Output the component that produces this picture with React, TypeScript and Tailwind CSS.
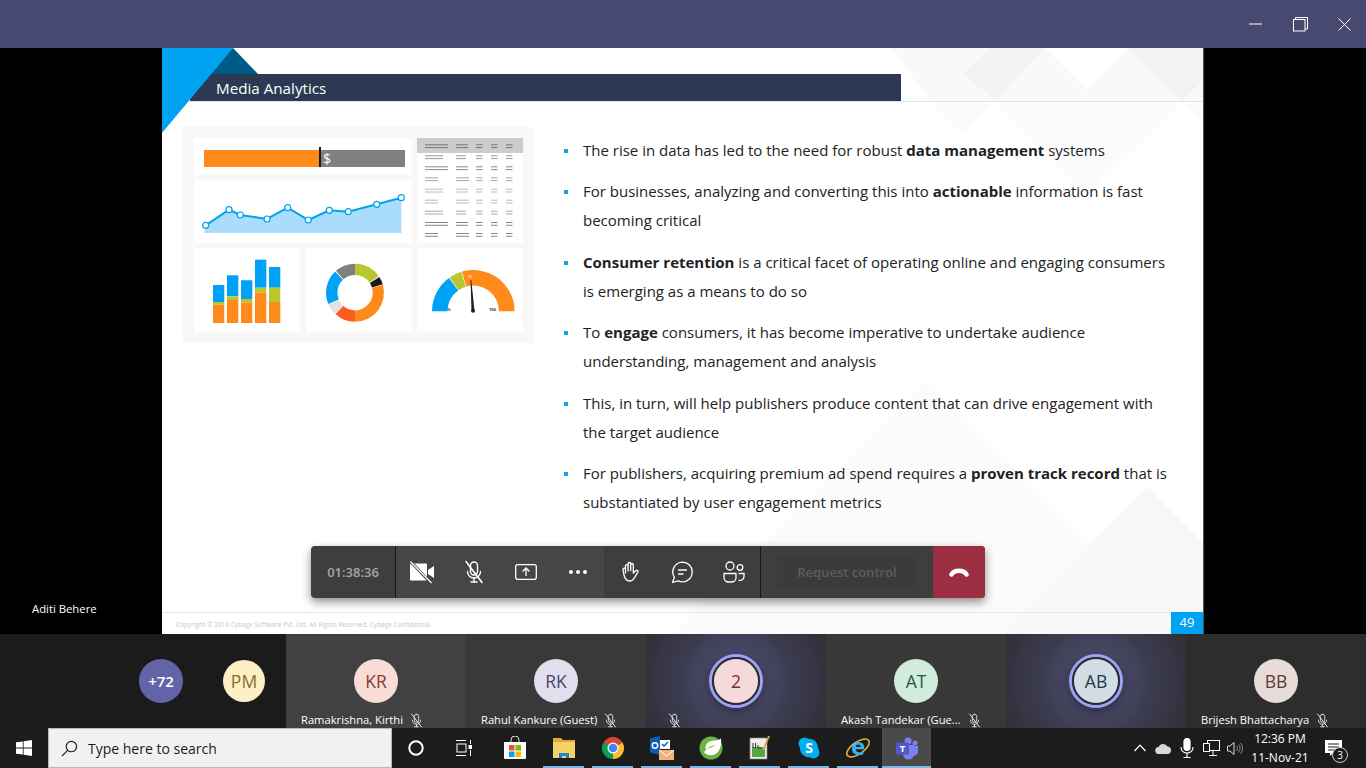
import React from "react";

const sans = "font-['Open_Sans','Noto_Sans',sans-serif]";

function polar(cx: number, cy: number, r: number, deg: number) {
  const a = ((deg - 90) * Math.PI) / 180;
  return [cx + r * Math.cos(a), cy + r * Math.sin(a)];
}
function arc(cx: number, cy: number, ro: number, ri: number, a: number, b: number) {
  const [x1, y1] = polar(cx, cy, ro, a);
  const [x2, y2] = polar(cx, cy, ro, b);
  const [x3, y3] = polar(cx, cy, ri, b);
  const [x4, y4] = polar(cx, cy, ri, a);
  const large = b - a > 180 ? 1 : 0;
  return `M${x1} ${y1}A${ro} ${ro} 0 ${large} 1 ${x2} ${y2}L${x3} ${y3}A${ri} ${ri} 0 ${large} 0 ${x4} ${y4}Z`;
}

function MoneyBar() {
  return (
    <svg width="218" height="37" viewBox="0 0 218 37">
      <rect x="10" y="12" width="201" height="17" fill="#808080" />
      <rect x="10" y="12" width="115" height="17" fill="#ff8a1c" />
      <rect x="125" y="9" width="2" height="20" fill="#1a1a1a" />
      <text x="129" y="26" fill="#fff" fontSize="14" fontWeight="500" fontFamily="Open Sans">$</text>
    </svg>
  );
}

function LineChart() {
  const p: [number, number][] = [[11.7, 45.3], [35, 29.7], [46.3, 35], [73, 39], [93.7, 27.7], [114.3, 40], [135.3, 30.3], [154.3, 31.7], [182.7, 24.3], [207.3, 17.7]];
  const line = p.map((q) => q.join(",")).join(" ");
  return (
    <svg width="218" height="63" viewBox="0 0 218 63">
      <polygon points={`10.3,53 ${line} 207.3,53`} fill="#aaddfc" />
      <polyline points={line} fill="none" stroke="#00a2ef" strokeWidth="2" />
      {p.map((q, i) => (
        <circle key={i} cx={q[0]} cy={q[1]} r="3" fill="#fff" stroke="#00a2ef" strokeWidth="1.2" />
      ))}
    </svg>
  );
}

function TableChart() {
  const widths = [23, 18, 23, 13, 18, 13, 18, 23, 13];
  const ys = [8.3, 19.3, 30.3, 41.3, 52.7, 63.7, 74.7, 86, 97];
  const shade = ["#777", "#999", "#8a8a8a", "#aaa", "#bbb", "#bbb", "#aaa", "#888", "#888"];
  const second = [12, 10, 12, 13, 12, 13, 10, 12, 13];
  return (
    <svg width="106" height="105" viewBox="0 0 106 105">
      <rect x="0" y="0" width="106" height="15" fill="#cccccc" />
      {ys.map((y, i) => (
        <g key={i} fill={shade[i]}>
          {[
            [8, widths[i]],
            [39, second[i]],
            [59, 6.5],
            [74, 6.5],
            [89, 6.5],
          ].map(([x, w], j) => (
            <g key={j}>
              <rect x={x} y={y - 2} width={w} height="1" />
              <rect x={x} y={y + 0.8} width={w} height="1" />
            </g>
          ))}
        </g>
      ))}
    </svg>
  );
}

function StackBars() {
  const bars = [
    [19, 37, 54, 56.7],
    [33, 27.3, 48.3, 52],
    [47, 32.3, 51, 54.7],
    [61, 11.7, 39.7, 44.7],
    [75, 19, 39.7, 54],
  ];
  return (
    <svg width="106" height="84" viewBox="0 0 106 84">
      {bars.map(([x, a, b, c]) => (
        <g key={x}>
          <rect x={x} y={a} width="11.3" height={b - a} fill="#00a2f7" />
          <rect x={x} y={b} width="11.3" height={c - b} fill="#b9c72f" />
          <rect x={x} y={c} width="11.3" height={75 - c} fill="#ff8a1c" />
        </g>
      ))}
    </svg>
  );
}

function Donut() {
  const seg: [number, number, string][] = [
    [0, 55, "#b9c72f"],
    [57, 73, "#1a1a1a"],
    [74, 180, "#ff8a1c"],
    [180, 222, "#ff5a1f"],
    [223, 246, "#e2e2e2"],
    [247, 317, "#00a2f7"],
    [319, 360, "#808080"],
  ];
  return (
    <svg width="106" height="84" viewBox="0 0 106 84">
      {seg.map(([a, b, c]) => (
        <path key={a} d={arc(49, 44.7, 29, 17.7, a, b)} fill={c} />
      ))}
    </svg>
  );
}

function Gauge() {
  const cx = 56.3;
  const cy = 63.3;
  return (
    <svg width="106" height="84" viewBox="0 0 106 84">
      <path d={arc(cx, cy, 41.3, 25.7, -90, -36)} fill="#00a2f7" />
      <path d={arc(cx, cy, 41.3, 25.7, -35, -17)} fill="#b9c72f" />
      <path d={arc(cx, cy, 41.3, 25.7, -16, 90)} fill="#ff8a1c" />
      <polygon points="53.5,32 54.3,32 57.5,63 54.5,63" fill="#222" />
      <circle cx="56" cy="62.7" r="2" fill="#222" />
      <text x="51" y="30" fontSize="4" fill="#fff" fontFamily="Open Sans">45</text>
      <text x="31" y="63" fontSize="4" fontWeight="700" fill="#333" fontFamily="Open Sans">0</text>
      <text x="72" y="63" fontSize="4" fontWeight="700" fill="#333" fontFamily="Open Sans">100</text>
    </svg>
  );
}

function CamOff() {
  return (
    <svg width="26" height="24" viewBox="0 0 26 24" fill="none">
      <path d="M1 4.500a1 1 0 0 1 1-1h15a1 1 0 0 1 1 1v15a1 1 0 0 1-1 1H2a1 1 0 0 1-1-1z" fill="#fff" />
      <path d="M19 10l6-4v12l-6-4z" fill="#fff" />
      <path d="M1 1l21 22" stroke="#464646" strokeWidth="3" />
      <path d="M1.500 1.500l21 21.500" stroke="#fff" strokeWidth="1.2" />
    </svg>
  );
}

function MicOff({ size = 24, stroke = "#fff" }: { size?: number; stroke?: string }) {
  return (
    <svg width={size} height={size} viewBox="0 0 24 24" fill="none" stroke={stroke} strokeWidth="1.4" strokeLinecap="round">
      <rect x="8.500" y="2" width="7" height="13" rx="3.500" />
      <path d="M5.500 11.500c0 4 3 6.500 6.500 6.500s6.500-2.500 6.500-6.500" />
      <path d="M12 18v4M9 22h6" />
      <path d="M4 1.500l16 21" strokeWidth="1.6" />
    </svg>
  );
}

function ShareIcon() {
  return (
    <svg width="24" height="24" viewBox="0 0 24 24" fill="none" stroke="#fff" strokeWidth="1.3">
      <rect x="1.700" y="4.700" width="20.600" height="14.600" rx="2" />
      <path d="M12 16V8.500M8.600 11.500L12 8l3.400 3.500" />
    </svg>
  );
}

function HandIcon() {
  return (
    <svg width="24" height="24" viewBox="0 0 24 24" fill="none" stroke="#fff" strokeWidth="1.3" strokeLinejoin="round" strokeLinecap="round">
      <path d="M7.500 13V6a1.300 1.300 0 0 1 2.600 0v5M10.100 10.500V3.800a1.300 1.300 0 0 1 2.600 0v6.700M12.700 10.500V4.800a1.300 1.300 0 0 1 2.600 0v8.200l2.600-2.500c1.300-1 2.800.4 1.900 1.600l-3.300 5.600c-1.100 2-2.500 3.300-4.800 3.300-3.200 0-4.800-2.300-5.600-5.500L5 9.500c-.2-1.600 2-1.900 2.500-.4" />
    </svg>
  );
}

function ChatIcon() {
  return (
    <svg width="24" height="24" viewBox="0 0 24 24" fill="none" stroke="#fff" strokeWidth="1.3" strokeLinecap="round">
      <path d="M12.500 2.200a9.800 9.800 0 0 1 0 19.600c-1.600 0-3-.4-4.300-1L2.500 22.500l1.900-5.200a9.800 9.800 0 0 1 8.100-15.100z" strokeLinejoin="round" />
      <path d="M8.500 10h8M8.500 14h4.500" />
    </svg>
  );
}

function PeopleIcon() {
  return (
    <svg width="24" height="24" viewBox="0 0 24 24" fill="none" stroke="#fff" strokeWidth="1.3">
      <circle cx="8" cy="6" r="4" />
      <circle cx="18" cy="7.500" r="2.800" />
      <path d="M2 13.500h12v4a4.500 4.500 0 0 1-4.500 4.500h-3A4.500 4.500 0 0 1 2 17.500z" strokeLinejoin="round" />
      <path d="M16.500 13.500H22v3a4 4 0 0 1-5.500 3.700" />
    </svg>
  );
}

function HangUp() {
  return (
    <svg width="22" height="10" viewBox="0 0 22 10" fill="none" stroke="#fff" strokeLinecap="round">
      <path d="M3.500 7.500C6 2.500 16 2.500 18.500 7.500" strokeWidth="4.500" />
    </svg>
  );
}

function ToolBtn({ children }: { children: React.ReactNode }) {
  return <div className="w-[52px] h-full flex items-center justify-center">{children}</div>;
}

function Toolbar() {
  return (
    <div className={`absolute left-[149px] top-[498px] w-[674px] h-[52px] flex rounded-[4px] overflow-hidden bg-[#3e3e3e] shadow-[0_4px_10px_rgba(0,0,0,0.45)] ${sans}`}>
      <div className="w-[85px] pt-[1px] flex items-center justify-center border-r border-[#1a1a1a] text-[13px] font-semibold text-[#a5a5a5]">01:38:36</div>
      <div className="w-[208px] flex bg-[#464646]">
        <ToolBtn><CamOff /></ToolBtn>
        <ToolBtn><MicOff /></ToolBtn>
        <ToolBtn><ShareIcon /></ToolBtn>
        <ToolBtn>
          <div className="flex gap-[3px]">
            <span className="w-[4px] h-[4px] rounded-full bg-white" />
            <span className="w-[4px] h-[4px] rounded-full bg-white" />
            <span className="w-[4px] h-[4px] rounded-full bg-white" />
          </div>
        </ToolBtn>
      </div>
      <div className="w-[157px] flex border-r border-[#1a1a1a]">
        <ToolBtn><HandIcon /></ToolBtn>
        <ToolBtn><ChatIcon /></ToolBtn>
        <ToolBtn><PeopleIcon /></ToolBtn>
      </div>
      <div className="flex-1 flex items-center justify-center">
        <div className="w-[140px] h-[32px] pt-[1px] rounded-[2px] flex items-center justify-center bg-[#3b3b3b] text-[13px] font-semibold text-[#5d5d5d]">Request control</div>
      </div>
      <div className="w-[52px] bg-[#9b2f41] flex items-center justify-center"><HangUp /></div>
    </div>
  );
}

function Tile({ name, initials, bg, fg, tile, speaking, mic = true }: { name?: string; initials: string; bg: string; fg: string; tile: string; speaking?: boolean; mic?: boolean }) {
  return (
    <div className={`w-[180px] h-[94px] flex flex-col ${tile}`}>
      <div className="h-[78px] pt-[25px] flex justify-center">
        <div className="relative w-[44px] h-[44px]">
          {speaking && <div className="absolute -inset-[5px] rounded-full border-[3px] border-[#9ea2f5] shadow-[0_4px_12px_rgba(20,20,40,0.5)]" />}
          {speaking && <div className="absolute -inset-[2px] rounded-full border-[2px] border-[#2a2a32]" />}
          <div className={`relative w-[44px] h-[44px] rounded-full flex items-center justify-center text-[17.500px] font-medium ${bg} ${fg}`}>{initials}</div>
        </div>
      </div>
      {mic && (
        <div className={`h-[16px] flex items-center gap-[6px] text-[11.200px] leading-[16px] text-white whitespace-nowrap ${name ? "pl-[15px]" : "pl-[21px]"}`}>
          {name && <span>{name}</span>}
          <MicOff size={15} stroke="#e8e8e8" />
        </div>
      )}
    </div>
  );
}

function WinLogo() {
  return (
    <svg width="16" height="16" viewBox="0 0 16 16" fill="#fff">
      <path d="M0 2.300l6.800-.9v6.200H0zM7.600 1.300L16 0v7.600H7.600zM0 8.400h6.800v6.200L0 13.700zM7.600 8.400H16V16l-8.400-1.200z" />
    </svg>
  );
}

function TaskIcon({ children, active, run }: { children: React.ReactNode; active?: boolean; run?: boolean }) {
  return (
    <div className={`relative h-[40px] flex items-center justify-center w-[49px] ${active ? "bg-[#4a4a4a]" : ""}`}>
      {children}
      {run && <span className={`absolute bottom-0 h-[2px] bg-[#76b9ed] ${active ? "left-0 right-0" : "left-[4px] right-[4px]"}`} />}
    </div>
  );
}

function Taskbar() {
  return (
    <div className={`h-[40px] bg-[#1c1c1c] flex items-center ${sans}`}>
      <div className="w-[48px] h-full flex items-center justify-center"><WinLogo /></div>
      <div className="w-[344px] h-[40px] bg-[#f1f1f1] border border-[#b8b8b8] flex items-center pl-[12px] gap-[10px] text-[14px] text-[#1a1a1a]">
        <svg width="17" height="17" viewBox="0 0 18 18" fill="none" stroke="#1a1a1a" strokeWidth="1.200">
          <circle cx="11" cy="7" r="5.500" />
          <path d="M7 11l-6 6" />
        </svg>
        <span>Type here to search</span>
      </div>
      <div className="w-[48px] flex justify-center">
        <svg width="16" height="16" viewBox="0 0 16 16" fill="none" stroke="#fff" strokeWidth="2"><circle cx="8" cy="8" r="6.700" /></svg>
      </div>
      <div className="w-[48px] mr-[2px] flex justify-center">
        <svg width="16" height="16" viewBox="0 0 16 16" fill="none" stroke="#fff" strokeWidth="1">
          <path d="M0 .5h10M0 15.500h10" />
          <rect x="1" y="4" width="9" height="8" />
          <path d="M14.500 0v4M14.500 10v6" />
          <rect x="13" y="5.500" width="3" height="3" fill="#fff" />
        </svg>
      </div>
      <TaskIcon>
        <svg width="24" height="24" viewBox="0 0 24 24">
          <path d="M8 6V4a4 4 0 0 1 8 0v2" fill="none" stroke="#ddd" strokeWidth="1" />
          <path d="M1 6h22v16a1 1 0 0 1-1 1H2a1 1 0 0 1-1-1z" fill="#fff" />
          <rect x="6" y="9" width="5.500" height="5.500" fill="#f25022" />
          <rect x="12.500" y="9" width="5.500" height="5.500" fill="#7fba00" />
          <rect x="6" y="15.500" width="5.500" height="5.500" fill="#00a4ef" />
          <rect x="12.500" y="15.500" width="5.500" height="5.500" fill="#ffb900" />
        </svg>
      </TaskIcon>
      <TaskIcon run>
        <svg width="24" height="22" viewBox="0 0 24 22">
          <path d="M1 1h8l2 2h12v18H1z" fill="#e0a93a" />
          <rect x="1" y="5" width="22" height="16" fill="#f8d264" />
          <path d="M7 21v-5h10v5h-3v-2h-4v2z" fill="#1d85d8" />
        </svg>
      </TaskIcon>
      <TaskIcon run>
        <svg width="24" height="24" viewBox="0 0 24 24">
          <path d={arc(12, 12, 11, 5, -60, 60)} fill="#db4437" />
          <path d={arc(12, 12, 11, 5, 60, 180)} fill="#fbc02d" />
          <path d={arc(12, 12, 11, 5, 180, 300)} fill="#0f9d58" />
          <circle cx="12" cy="12" r="5.500" fill="#fff" />
          <circle cx="12" cy="12" r="4.300" fill="#4285f4" />
        </svg>
      </TaskIcon>
      <TaskIcon run>
        <svg width="26" height="26" viewBox="0 0 26 26">
          <path d="M1 3.500L11 1v19L1 17.500z" fill="#0b5fb3" />
          <rect x="11" y="5" width="10" height="9" fill="#fff" />
          <path d="M13 9l2 2 4-4" fill="none" stroke="#0b5fb3" strokeWidth="1.500" />
          <circle cx="6" cy="10.500" r="2.700" fill="none" stroke="#fff" strokeWidth="1.500" />
          <rect x="10" y="15" width="15" height="10" fill="#f2b578" />
          <path d="M10 15l7.500 6 7.500-6" fill="none" stroke="#fff" strokeWidth="1" />
        </svg>
      </TaskIcon>
      <TaskIcon run>
        <svg width="24" height="24" viewBox="0 0 24 24">
          <circle cx="12" cy="12" r="11.500" fill="#6ab344" />
          <path d="M22 2.500c1 8-2 15-8 16.500-4 .8-8-1-9-3 4-5 8-4 13-8-4 2-8 2-11 6-1.500-4 1-8 5-9 4-1 7 0 10-2.500z" fill="#fff" />
        </svg>
      </TaskIcon>
      <TaskIcon run>
        <svg width="22" height="24" viewBox="0 0 22 24">
          <rect x="1" y="2" width="17" height="21" fill="#efefe6" stroke="#888" strokeWidth="0.700" />
          <rect x="3" y="11" width="13" height="10" fill="#54a548" />
          <path d="M4 7v5M6.500 7v5M9 9v3h3" stroke="#333" strokeWidth="1" fill="none" />
          <path d="M21 0l-6 14-1.500 1 .3-2L19 0z" fill="#e8a23a" />
        </svg>
      </TaskIcon>
      <TaskIcon run>
        <svg width="22" height="22" viewBox="0 0 22 22">
          <circle cx="6.500" cy="6.500" r="6" fill="#00aff0" />
          <circle cx="15.500" cy="15.500" r="6" fill="#00aff0" />
          <circle cx="11" cy="11" r="9.200" fill="#00aff0" />
          <text x="11" y="16" textAnchor="middle" fontSize="14" fontWeight="700" fill="#fff" fontFamily="Open Sans">S</text>
        </svg>
      </TaskIcon>
      <TaskIcon run>
        <svg width="26" height="26" viewBox="0 0 26 26" className="overflow-visible">
          <ellipse cx="13" cy="13" rx="13" ry="6" transform="rotate(-35 13 13)" fill="none" stroke="#e5b52d" strokeWidth="1.600" />
          <text x="13" y="20" textAnchor="middle" fontSize="24" fontWeight="700" fill="#35b3ee" fontFamily="Open Sans">e</text>
        </svg>
      </TaskIcon>
      <TaskIcon active run>
        <svg width="24" height="24" viewBox="0 0 24 24">
          <circle cx="20" cy="7" r="2.500" fill="#7b83eb" />
          <path d="M15 10h8v6a4 4 0 0 1-6 3z" fill="#7b83eb" />
          <circle cx="13" cy="5" r="3.500" fill="#7b83eb" />
          <path d="M8 9h11v9a5.500 5.500 0 0 1-11 0z" fill="#7b83eb" />
          <rect x="1" y="6.500" width="13" height="12" rx="1" fill="#4f58ca" />
          <text x="7.500" y="16" textAnchor="middle" fontSize="9.500" fontWeight="700" fill="#fff" fontFamily="Open Sans">T</text>
        </svg>
      </TaskIcon>
      <div className="flex-1" />
      <div className="flex items-center h-full">
        <div className="w-[23px] flex justify-center">
          <svg width="12" height="8" viewBox="0 0 12 8" fill="none" stroke="#fff" strokeWidth="1.200"><path d="M.5 7L6 1.200 11.500 7" /></svg>
        </div>
        <div className="w-[24px] flex justify-center">
          <svg width="17" height="11" viewBox="0 0 17 11" fill="#d8d8d8"><path d="M4 11a3.500 3.500 0 0 1-.5-7A5 5 0 0 1 12.500 3.500 3.800 3.800 0 0 1 13 11z" /></svg>
        </div>
        <div className="w-[24px] flex justify-center">
          <svg width="14" height="20" viewBox="0 0 14 20" fill="none" stroke="#fff" strokeWidth="1.200">
            <rect x="4" y="0.500" width="6" height="12" rx="3" fill="#fff" />
            <path d="M1 9c0 3.500 2.500 6 6 6s6-2.500 6-6M7 15v4M3.500 19.500h7" />
          </svg>
        </div>
        <div className="w-[25px] flex justify-center">
          <svg width="17" height="17" viewBox="0 0 17 17" fill="none" stroke="#fff" strokeWidth="1">
            <rect x="4.500" y="0.500" width="12" height="10" />
            <rect x="0.500" y="3.500" width="6" height="8" fill="#1c1c1c" />
            <path d="M10 11v4M6 15.500h8" />
          </svg>
        </div>
        <div className="w-[22px] flex justify-center">
          <svg width="17" height="15" viewBox="0 0 17 15" fill="none" stroke="#ddd" strokeWidth="1">
            <path d="M.5 5h2.500L7 1.500v12L3 10H.5z" />
            <path d="M9.500 5a3.500 3.500 0 0 1 0 5M11.500 3.500a6 6 0 0 1 0 8M13.500 2a8.500 8.500 0 0 1 0 11" stroke="#888" />
          </svg>
        </div>
        <div className="w-[68px] flex flex-col items-center text-[12px] leading-[19px] text-white">
          <span>12:36 PM</span>
          <span>11-Nov-21</span>
        </div>
        <div className="relative w-[38px] h-full mr-[14px] flex items-center justify-center">
          <svg width="17" height="17" viewBox="0 0 17 17">
            <path d="M0 0h17v13H8l-3 3v-3H0z" fill="#fff" />
            <path d="M3 4h11M3 7h11M3 10h7" stroke="#1c1c1c" strokeWidth="1" />
          </svg>
          <span className="absolute left-[18px] top-[19px] w-[16px] h-[16px] rounded-full border border-[#ccc] bg-[#1c1c1c] text-white text-[10px] leading-[14px] text-center">3</span>
        </div>
      </div>
    </div>
  );
}

const bullets: React.ReactNode[] = [
  <>The rise in data has led to the need for robust <b>data management</b> systems</>,
  <>For businesses, analyzing and converting this into <b>actionable</b> information is fast becoming critical</>,
  <><b>Consumer retention</b> is a critical facet of operating online and engaging consumers is emerging as a means to do so</>,
  <>To <b>engage</b> consumers, it has become imperative to undertake audience understanding, management and analysis</>,
  <>This, in turn, will help publishers produce content that can drive engagement with the target audience</>,
  <>For publishers, acquiring premium ad spend requires a <b>proven track record</b> that is substantiated by user engagement metrics</>,
];

function SlideBackdrop() {
  return (
    <svg className="absolute inset-0 w-full h-full" viewBox="0 0 1041 586" fill="#f9f9f9">
      <polygon points="730,0 883,0 925,42 966,0 1041,0 1041,53 768,53" />
      <polygon points="801,25 828,0 883,0 833,53" fill="#f3f3f3" />
      <polygon points="966,0 1041,0 1041,33 1020,53" fill="#f3f3f3" />
      <polygon points="768,55 833,55 800,87" fill="#fbfbfb" />
      <polygon points="833,55 1020,55 925,147" fill="#fbfbfb" />
      <polygon points="1041,55 1041,75 1020,55" fill="#fbfbfb" />
      <polygon points="765,332 1019,586 511,586" fill="#fbfbfb" />
      <polygon points="985,439 1041,495 1041,586 838,586" fill="#f8f8f8" />
    </svg>
  );
}

export default function App() {
  return (
    <div className={`w-[1366px] h-[768px] flex flex-col overflow-hidden bg-black ${sans}`}>
      <header className="h-[48px] bg-[#484970] flex justify-end items-center shrink-0">
        <div className="w-[44px] flex justify-center">
          <svg width="14" height="2" viewBox="0 0 14 2"><rect width="13" height="1" y="0.500" fill="#fff" /></svg>
        </div>
        <div className="w-[44px] flex justify-center">
          <svg width="15" height="15" viewBox="0 0 15 15" fill="none" stroke="#fff" strokeWidth="1">
            <rect x="0.500" y="2.500" width="11.500" height="11.500" />
            <path d="M2.500 2.500V.5H14.500v11.500h-2.500" />
          </svg>
        </div>
        <div className="w-[44px] flex justify-center">
          <svg width="13" height="13" viewBox="0 0 13 13" stroke="#fff" strokeWidth="1"><path d="M.5.5l12 12M12.500.5l-12 12" /></svg>
        </div>
      </header>
      <main className="h-[586px] flex shrink-0">
        <div className="w-[162px] flex items-end pb-[17px] pl-[32px] text-[11.300px] leading-[16px] text-white font-medium">Aditi Behere</div>
        <section className="relative w-[1042px] bg-white border-r border-[#555] flex flex-col">
          <SlideBackdrop />
          <div className="relative h-[26px]" />
          <div className="relative ml-[28px] w-[711px] h-[28px] bg-[#2b3a52] pl-[26px] pt-[1px] flex items-center text-[15.200px] text-white">Media Analytics</div>
          <div className="absolute left-0 top-[53px] w-[1041px] h-[1px] bg-[#cfeaf6]" />
          <svg className="absolute left-0 top-0" width="100" height="86" viewBox="0 0 100 86">
            <polygon points="71,0 96,26 27,26" fill="#005a87" />
            <polygon points="0,0 71,0 0,85" fill="#00a2f2" />
          </svg>
          <div className="relative flex">
            <div className="ml-[21px] mt-[25px] w-[351px] h-[216px] bg-[#f8f8f8] pl-[11px] pt-[11px] grid grid-cols-[106px_106px_106px] grid-rows-[37px_63px_84px] gap-x-[5.500px] gap-y-[5px]">
              <div className="col-span-2 bg-white"><MoneyBar /></div>
              <div className="row-span-2 bg-white"><TableChart /></div>
              <div className="col-span-2 bg-white"><LineChart /></div>
              <div className="bg-white"><StackBars /></div>
              <div className="bg-white"><Donut /></div>
              <div className="bg-white"><Gauge /></div>
            </div>
            <ul className="ml-[30px] mt-[34px] w-[611px] flex flex-col gap-[12.400px] text-[15px] leading-[29px] text-[#222]">
              {bullets.map((b, i) => (
                <li key={i} className="relative pl-[19px]">
                  <span className="absolute left-0 top-[13px] w-[4px] h-[4px] bg-[#1ba1e2]" />
                  {b}
                </li>
              ))}
            </ul>
          </div>
          <div className="relative mt-auto h-[22px] border-t border-[#d4eef8] flex items-center justify-between pl-[14px]">
            <span className="pt-[2px] text-[6.500px] text-[#c8c8c8]">Copyright © 2018 Cybage Software Pvt. Ltd. All Rights Reserved. Cybage Confidential</span>
            <span className="w-[32px] h-[22px] -mt-[1px] bg-[#00a2f2] text-white text-[13px] flex items-center justify-center">49</span>
          </div>
          <Toolbar />
        </section>
        <div className="flex-1 bg-black" />
      </main>
      <div className="h-[94px] flex shrink-0 bg-[#1b1b1b]">
        <div className="w-[286px] flex pt-[25px]">
          <div className="ml-[139px] w-[44px] h-[44px] rounded-full bg-[#6264a7] text-white text-[15px] font-semibold flex items-center justify-center">+72</div>
          <div className="ml-[40px] w-[42px] h-[42px] mt-[1px] rounded-full bg-[#fdf0c4] text-[#8a6d2b] text-[17.500px] font-medium flex items-center justify-center">PM</div>
        </div>
        <Tile name="Ramakrishna, Kirthi" initials="KR" bg="bg-[#fadcd6]" fg="text-[#8a3a30]" tile="bg-[#414141]" />
        <Tile name="Rahul Kankure (Guest)" initials="RK" bg="bg-[#e1dfee]" fg="text-[#4a4468]" tile="bg-[#393939]" />
        <Tile initials="2" bg="bg-[#f5dada]" fg="text-[#7d2a38]" tile="bg-[radial-gradient(circle_at_50%_50%,#54547c_0%,#3c3c50_55%,#2f2f38_100%)]" speaking />
        <Tile name="Akash Tandekar (Gue..." initials="AT" bg="bg-[#d1ebdd]" fg="text-[#1d5c40]" tile="bg-[#383838]" />
        <Tile initials="AB" bg="bg-[#d0dde4]" fg="text-[#1f3a4a]" tile="bg-[radial-gradient(circle_at_50%_50%,#54547c_0%,#3c3c50_55%,#2f2f38_100%)]" speaking mic={false} />
        <Tile name="Brijesh Bhattacharya" initials="BB" bg="bg-[#e8dcd8]" fg="text-[#5a3e34]" tile="bg-[#2d2d2d]" />
      </div>
      <Taskbar />
    </div>
  );
}
